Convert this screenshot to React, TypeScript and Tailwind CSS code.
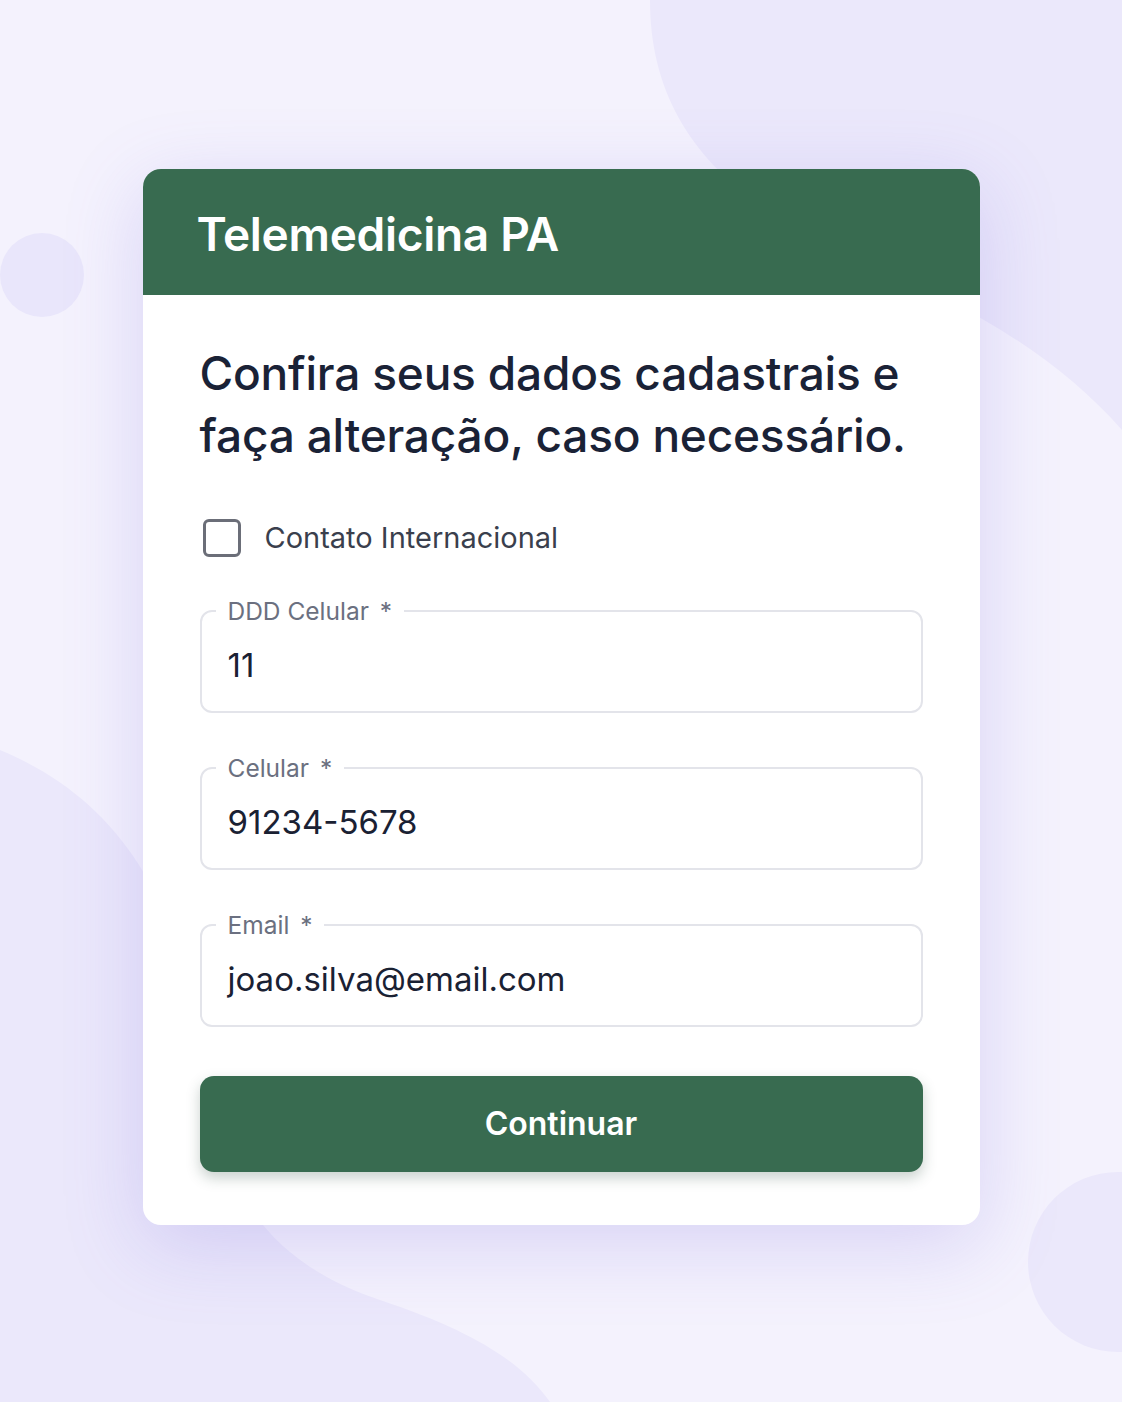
import { useState } from 'react'

function Field({ label, value }: { label: string; value: string }) {
  return (
    <fieldset className="rounded-[12px] border-2 border-[#e3e4ea] px-[26px] pb-[26px] pt-0">
      <legend className="ml-[-12px] px-[12px] text-[24.5px] leading-[28px] text-[#6b7080]">
        {label} <span className="ml-[4px]">*</span>
      </legend>
      <div className="mt-[20px] text-[33px] leading-[40px] text-[#1a2133]">{value}</div>
    </fieldset>
  )
}

export default function App() {
  const [intl, setIntl] = useState(false)

  return (
    <div
      className="relative min-h-[1402px] w-full overflow-hidden bg-[#f4f2fd]"
      style={{ fontFamily: 'Inter, "Noto Sans", sans-serif' }}
    >
      {/* background blobs */}
      <svg className="absolute inset-0 h-full w-full" viewBox="0 0 1122 1402" preserveAspectRatio="none">
        <path d="M650 0 C 650 120 720 200 860 260 C 980 310 1060 360 1122 430 L1122 0 Z" fill="#ebe8fb" />
        <circle cx="42" cy="275" r="42" fill="#e9e6fb" />
        <path d="M0 750 C 120 800 180 900 200 1050 C 215 1180 260 1260 380 1300 C 470 1330 520 1360 550 1402 L0 1402 Z" fill="#ebe8fb" />
        <circle cx="1118" cy="1262" r="90" fill="#ebe8fb" />
      </svg>

      <div className="relative flex justify-center pt-[169px]">
        <div className="w-[837px] overflow-hidden rounded-[18px] bg-white shadow-[0_20px_80px_rgba(120,100,220,0.22)]">
          <div className="flex h-[126px] items-center bg-[#386b50] px-[54px]">
            <h1 className="pt-[4px] text-[46px] font-semibold tracking-[-0.3px] text-white">Telemedicina PA</h1>
          </div>

          <div className="px-[57px] pb-[53px] pt-[47px]">
            <h2 className="text-[46px] font-medium leading-[62px] tracking-[-0.2px] text-[#1a2236]">
              Confira seus dados cadastrais e faça alteração, caso necessário.
            </h2>

            <label className="mt-[50px] flex cursor-pointer items-center gap-[24px] pl-[3px]">
              <input
                type="checkbox"
                checked={intl}
                onChange={e => setIntl(e.target.checked)}
                className="h-[38px] w-[38px] appearance-none rounded-[6px] border-[3px] border-[#6b6e78] bg-white checked:bg-[#386b50]"
              />
              <span className="text-[29px] text-[#3a3f4d]">Contato Internacional</span>
            </label>

            <div className="mt-[37px] flex flex-col gap-[41px]">
              <Field label="DDD Celular" value="11" />
              <Field label="Celular" value="91234-5678" />
              <Field label="Email" value="joao.silva@email.com" />
            </div>

            <button className="mt-[49px] h-[96px] w-full rounded-[14px] bg-[#386b50] text-[32px] font-semibold text-white shadow-[0_6px_14px_rgba(40,70,55,0.25)]">
              Continuar
            </button>
          </div>
        </div>
      </div>
    </div>
  )
}
